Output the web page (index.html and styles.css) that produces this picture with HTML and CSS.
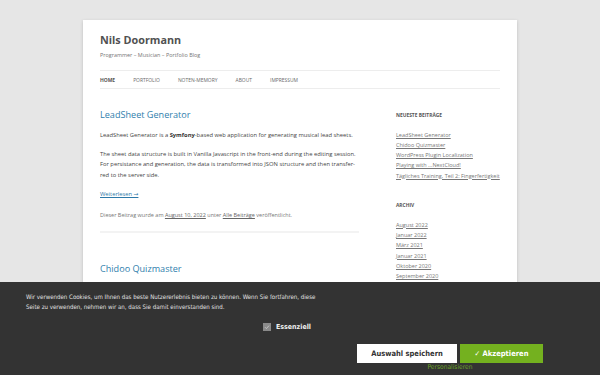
FILE: index.html
```html
<!DOCTYPE html>
<html lang="de">
<head>
<meta charset="utf-8">
<title>Nils Doormann</title>
<link rel="stylesheet" href="styles.css">
</head>
<body>
<div class="site">
  <header class="site-header">
    <h1 class="site-title">Nils Doormann</h1>
    <p class="site-description">Programmer – Musician – Portfolio Blog</p>
    <nav class="main-nav">
      <a class="current">Home</a>
      <a>Portfolio</a>
      <a>Noten-Memory</a>
      <a>About</a>
      <a>Impressum</a>
    </nav>
  </header>
  <div class="main">
    <div class="content">
      <article class="post">
        <h2 class="entry-title">LeadSheet Generator</h2>
        <div class="entry-content">
          <p>LeadSheet Generator is a <strong>Symfony</strong>-based web application for generating musical lead sheets.</p>
          <p>The sheet data structure is built in Vanilla Javascript in the front-end during the editing session. For persistance and generation, the data is transformed into JSON structure and then transfer­red to the server side.</p>
          <p><a class="more">Weiterlesen →</a></p>
        </div>
        <footer class="entry-meta">Dieser Beitrag wurde am <a>August 10, 2022</a> unter <a>Alle Beiträge</a> veröffentlicht.</footer>
      </article>
      <article class="post">
        <h2 class="entry-title">Chidoo Quizmaster</h2>
        <div class="entry-content">
          <p>Chidoo Quizmaster is a quiz application.</p>
        </div>
      </article>
    </div>
    <aside class="sidebar">
      <section class="widget">
        <h3 class="widget-title">Neueste Beiträge</h3>
        <ul>
          <li><a>LeadSheet Generator</a></li>
          <li><a>Chidoo Quizmaster</a></li>
          <li><a>WordPress Plugin Localization</a></li>
          <li><a>Playing with …NextCloud!</a></li>
          <li><a>Tägliches Training, Teil 2: Fingerfertigkeit</a></li>
        </ul>
      </section>
      <section class="widget">
        <h3 class="widget-title">Archiv</h3>
        <ul>
          <li><a>August 2022</a></li>
          <li><a>Januar 2022</a></li>
          <li><a>März 2021</a></li>
          <li><a>Januar 2021</a></li>
          <li><a>Oktober 2020</a></li>
          <li><a>September 2020</a></li>
          <li><a>August 2020</a></li>
        </ul>
      </section>
    </aside>
  </div>
</div>

<div class="cookie-banner">
  <p class="cookie-text">Wir verwenden Cookies, um Ihnen das beste Nutzererlebnis bieten zu können. Wenn Sie fortfahren, diese Seite zu verwenden, nehmen wir an, dass Sie damit einverstanden sind.</p>
  <label class="cookie-check">
    <span class="box"><svg width="8" height="8" viewBox="0 0 8 8"><path d="M2 4.2 L3.4 5.6 L6 2.6" fill="none" stroke="#c8c8c8" stroke-width="0.9"/></svg></span>
    <span class="check-label">Essenziell</span>
  </label>
  <div class="cookie-actions">
    <div class="buttons">
      <button class="btn btn-save">Auswahl speichern</button>
      <button class="btn btn-accept">✓ Akzeptieren</button>
    </div>
    <a class="personalize">Personalisieren</a>
  </div>
</div>
</body>
</html>
```
FILE: styles.css
```css
html, body {
  margin: 0;
  padding: 0;
}
body {
  background: #e6e6e6;
  font-family: "Open Sans", "DejaVu Sans", sans-serif;
  color: #444;
  height: 375px;
  overflow: hidden;
}
.site {
  width: 400px;
  margin: 20px auto 0;
  padding: 0 17px;
  background: #fff;
  box-shadow: 0 1px 3px rgba(100, 100, 100, 0.3);
  min-height: 400px;
}
.site-header {
  padding-top: 11px;
}
.site-title {
  margin: 0;
  font-size: 10.8px;
  line-height: 18px;
  font-weight: 700;
  color: #515151;
}
.site-description {
  margin: 2px 0 0;
  font-size: 5.45px;
  line-height: 9px;
  color: #757575;
}
.main-nav {
  margin-top: 10px;
  border-top: 1px solid #ededed;
  border-bottom: 1px solid #ededed;
  display: flex;
  gap: 18px;
  height: 17px;
  align-items: center;
}
.main-nav a {
  font-size: 4.95px;
  text-transform: uppercase;
  color: #6a6a6a;
}
.main-nav a.current {
  font-weight: 700;
  color: #555;
}
.main {
  display: flex;
  justify-content: space-between;
  margin-top: 19px;
}
.content {
  width: 259px;
}
.post {
  border-bottom: 2px solid #f3f3f3;
  padding-bottom: 9.5px;
  margin-bottom: 29.5px;
}
.entry-title {
  margin: 0;
  font-size: 9.1px;
  line-height: 13px;
  font-weight: 400;
  color: #2f80ad;
}
.entry-content {
  margin-top: 8.5px;
  font-size: 5.8px;
  line-height: 10.3px;
  color: #444;
}
.entry-content p {
  margin: 0 0 9.4px;
}
.entry-content strong {
  font-weight: 700;
  color: #333;
}
.entry-content a.more {
  color: #2c78a8;
  text-decoration: underline;
}
.entry-meta {
  font-size: 5.5px;
  line-height: 12px;
  color: #777;
}
.entry-meta a {
  color: #666;
  text-decoration: underline;
}
.sidebar {
  width: 104px;
  padding-top: 3px;
}
.widget {
  margin-bottom: 20.5px;
}
.widget-title {
  margin: 0 0 9.5px;
  font-size: 4.9px;
  line-height: 9px;
  font-weight: 700;
  text-transform: uppercase;
  color: #555;
}
.widget ul {
  list-style: none;
  margin: 0;
  padding: 0;
}
.widget li {
  font-size: 5.5px;
  line-height: 10.25px;
  white-space: nowrap;
}
.widget a {
  color: #777;
  text-decoration: underline;
}
.cookie-banner {
  position: fixed;
  left: 0;
  right: 0;
  bottom: 0;
  height: 93px;
  background: #333;
  font-family: "DejaVu Sans Condensed", "DejaVu Sans", sans-serif;
  box-sizing: border-box;
  padding: 10px 0 0;
  display: flex;
  flex-direction: column;
}
.cookie-text {
  margin: 0 0 0 26px;
  width: 300px;
  font-size: 6.1px;
  line-height: 10px;
  color: #e0e0e0;
}
.cookie-check {
  display: flex;
  align-items: center;
  gap: 5px;
  margin: 11px 0 0 263px;
}
.cookie-check .box {
  width: 8px;
  height: 8px;
  background: #8a8a8a;
  display: flex;
}
.check-label {
  font-size: 7px;
  font-weight: 700;
  color: #f0f0f0;
}
.cookie-actions {
  align-self: flex-end;
  margin: 13px 57px 0 0;
  display: flex;
  flex-direction: column;
  align-items: center;
}
.buttons {
  display: flex;
  gap: 3px;
}
.btn {
  border: 0;
  height: 19px;
  font-family: "DejaVu Sans Condensed", "DejaVu Sans", sans-serif;
  font-size: 7.5px;
  font-weight: 700;
  padding: 0;
}
.btn-save {
  width: 100px;
  background: #fff;
  color: #333;
}
.btn-accept {
  width: 83px;
  background: #74b11f;
  color: #fff;
}
.personalize {
  font-size: 6.6px;
  line-height: 9px;
  color: #6ca02a;
  margin-top: 0;
}
```
